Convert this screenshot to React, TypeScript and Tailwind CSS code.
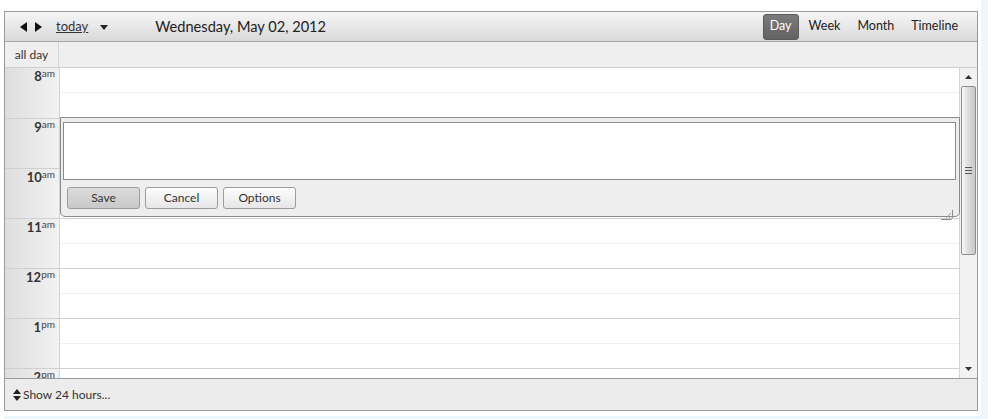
const hours = [
  { n: "8", s: "am" },
  { n: "9", s: "am" },
  { n: "10", s: "am" },
  { n: "11", s: "am" },
  { n: "12", s: "pm" },
  { n: "1", s: "pm" },
  { n: "2", s: "pm" },
];

function Tri({ dir }: { dir: "left" | "right" }) {
  const pts = dir === "left" ? "7,0 7,10 0,5" : "0,0 0,10 7,5";
  return (
    <svg width="7" height="10" viewBox="0 0 7 10">
      <polygon points={pts} fill="#111" />
    </svg>
  );
}

function Btn({ label, pressed }: { label: string; pressed?: boolean }) {
  return (
    <button
      className={
        "h-[22px] w-[73px] rounded-[3px] border border-[#9c9c9c] text-[12px] text-[#333] " +
        (pressed
          ? "bg-gradient-to-b from-[#dcdcdc] to-[#c9c9c9]"
          : "bg-gradient-to-b from-[#fdfdfd] to-[#e6e6e6]")
      }
    >
      {label}
    </button>
  );
}

export default function App() {
  return (
    <div className="flex h-[419px] w-[988px] bg-white font-['Lato',sans-serif] text-[#333]">
      <div className="flex w-[981px] flex-col">
        <div className="flex-1 pl-[4px] pt-[11px]">
          <div className="flex h-[400px] w-[974px] flex-col border border-[#9a9a9a]">
            {/* header */}
            <div className="flex h-[30px] items-center border-b border-[#a8a8a8] bg-gradient-to-b from-[#f6f6f6] to-[#d9d9d9]">
              <div className="ml-[15px] flex items-center gap-[8px]">
                <Tri dir="left" />
                <Tri dir="right" />
              </div>
              <span className="ml-[14px] text-[13px] underline">today</span>
              <span className="ml-[12px] mt-[1px]">
                <svg width="8" height="5" viewBox="0 0 8 5">
                  <polygon points="0,0 8,0 4,5" fill="#222" />
                </svg>
              </span>
              <span className="ml-[47px] text-[14.6px] text-[#222]">Wednesday, May 02, 2012</span>
              <div className="ml-auto mr-[19px] flex items-center text-[12.5px] text-[#222]">
                <span className="flex h-[26px] w-[36px] items-center justify-center rounded-[3px] border border-[#5a5a5a] bg-gradient-to-b from-[#7a7a7a] to-[#636363] text-white">
                  Day
                </span>
                <span className="ml-[10px]">Week</span>
                <span className="ml-[17px]">Month</span>
                <span className="ml-[17px]">Timeline</span>
              </div>
            </div>
            {/* all day */}
            <div className="flex h-[26px] border-b border-[#cfcfcf] bg-[#efefef]">
              <div className="flex w-[54px] items-center justify-center border-r border-[#d4d4d4] text-[12px]">
                all day
              </div>
            </div>
            {/* body */}
            <div className="relative flex h-[310px] overflow-hidden">
              <div className="flex w-[54px] flex-col bg-gradient-to-r from-[#dedede] to-[#f2f2f2]">
                {hours.map((h) => (
                  <div
                    key={h.n + h.s}
                    className="h-[50px] shrink-0 border-t border-[#cfcfcf] pr-[4px] pt-[2px] text-right text-[13px] leading-none first:border-t-0"
                  >
                    <span className="font-bold text-[#333]">{h.n}</span>
                    <span className="relative top-[-4px] text-[10px] text-[#444]">{h.s}</span>
                  </div>
                ))}
              </div>
              <div className="flex w-[901px] flex-col border-l border-r border-[#d4d4d4] bg-white">
                {hours.map((h) => (
                  <div
                    key={h.n + h.s}
                    className="h-[50px] shrink-0 border-t border-[#cfcfcf] first:border-t-0"
                  >
                    <div className="h-[25px] border-b border-dotted border-[#e2e2e2]" />
                  </div>
                ))}
              </div>
              {/* scrollbar */}
              <div className="flex w-[17px] flex-col items-center bg-[#f2f2f2]">
                <div className="flex h-[18px] items-center">
                  <svg width="7" height="4" viewBox="0 0 7 4">
                    <polygon points="0,4 7,4 3.5,0" fill="#333" />
                  </svg>
                </div>
                <div className="flex h-[169px] w-[15px] items-center justify-center rounded-[2px] border border-[#8f8f8f] bg-gradient-to-r from-[#f7f7f7] via-[#dcdcdc] to-[#c8c8c8]">
                  <div className="flex flex-col gap-[2px]">
                    <div className="h-px w-[7px] bg-[#555]" />
                    <div className="h-px w-[7px] bg-[#555]" />
                    <div className="h-px w-[7px] bg-[#555]" />
                  </div>
                </div>
                <div className="flex-1" />
                <div className="flex h-[16px] items-center pb-[3px]">
                  <svg width="7" height="4" viewBox="0 0 7 4">
                    <polygon points="0,0 7,0 3.5,4" fill="#333" />
                  </svg>
                </div>
              </div>

              {/* event editor overlay */}
              <div className="absolute left-[55px] top-[49px] h-[100px] w-[900px] rounded-b-[5px] border border-[#8a8a8a] bg-[#eeeeee] px-[2px] pt-[4px]">
                <div className="h-[58px] w-[893px] border border-[#8a8a8a] bg-white" />
                <div className="ml-[4px] mt-[7px] flex gap-[5px]">
                  <Btn label="Save" pressed />
                  <Btn label="Cancel" />
                  <Btn label="Options" />
                </div>
                <svg className="absolute bottom-[-4px] right-[6px]" width="12" height="10" viewBox="0 0 12 10">
                  <path d="M0 9.5 H9 Q11.5 9.5 11.5 7 V0" fill="none" stroke="#8a8a8a" />
                  <path d="M5 8 L10 3 M8 8 L10 6" stroke="#9a9a9a" />
                </svg>
              </div>
            </div>
            {/* footer */}
            <div className="flex flex-1 items-center border-t border-[#9a9a9a] bg-[#ececec] pl-[8px] text-[12px]">
              <svg width="8" height="12" viewBox="0 0 8 12" className="mr-[2px]">
                <polygon points="0,5 8,5 4,0" fill="#222" />
                <polygon points="0,7 8,7 4,12" fill="#222" />
              </svg>
              Show 24 hours...
            </div>
          </div>
        </div>
        <div className="ml-[4px] h-[3px] bg-[#eaf6fb]" />
      </div>
      <div className="w-[7px] bg-[#eef7fb]" />
    </div>
  );
}
